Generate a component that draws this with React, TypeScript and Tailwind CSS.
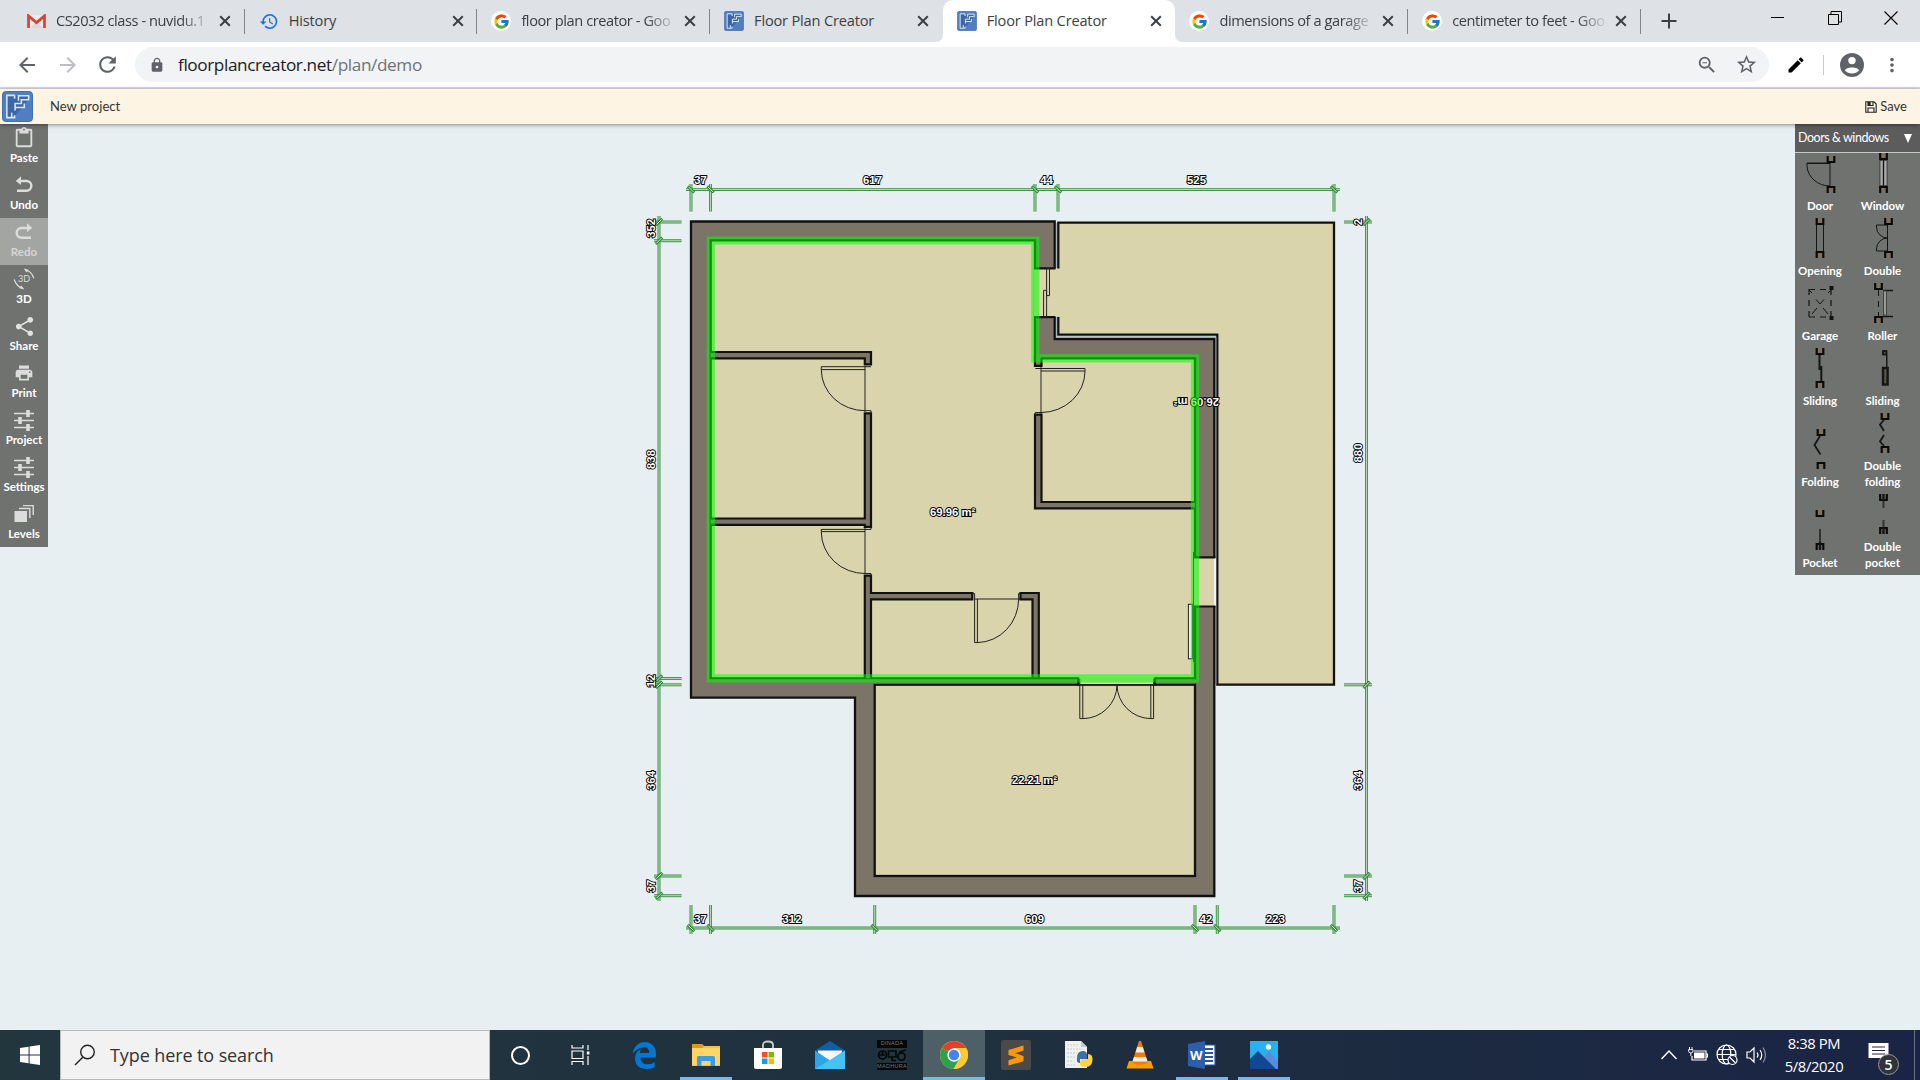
import React from 'react';
import { FcGoogle } from 'react-icons/fc';
import {
  MdArrowBack, MdArrowForward, MdRefresh, MdLock, MdStarBorder, MdZoomOut, MdEdit,
  MdMoreVert, MdHistory, MdShare, MdPrint, MdOutlineContentPaste,
} from 'react-icons/md';

type Kids = { children?: React.ReactNode };

/* ---------- logos ---------- */

const PlanLogo = ({ className }: { className: string }) => (
  <svg viewBox="0 0 32 32" preserveAspectRatio="none" className={className}>
    <rect x="0.5" y="0.5" width="31" height="31" rx="3.5" fill="#4f7fc2" stroke="#3f6cae" />
    <path d="M5 5 H27 V9 L22 16 L12 27 H5Z" fill="#3c66a4" />
    <path d="M13 4.5 H5 V27.5 H13 V25 M13 4.5 V8 M17 10 V5 H27.5 V9 H20 V13 H13.5 V20 M13.5 17 H23 V13 M10 27 V22.5" fill="none" stroke="#dbe7f6" strokeWidth="1.6" />
  </svg>
);

const GmailLogo = () => (
  <svg viewBox="0 0 20 16" preserveAspectRatio="none" className="h-[15px] w-[19px]">
    <rect x="1" y="1" width="18" height="14" rx="1.5" fill="#ececec" />
    <path d="M3 15 L10 8 L17 15Z" fill="#dadada" />
    <path d="M1.6 15 V2 L10 9.2 L18.4 2 V15" fill="none" stroke="#d94235" strokeWidth="2.9" />
  </svg>
);

const GoogleBadge = () => (
  <span className="flex size-5 items-center justify-center rounded-full bg-white">
    <FcGoogle className="size-[17px]" />
  </span>
);

/* ---------- browser tabs ---------- */

const CloseX = () => (
  <svg viewBox="0 0 12 12" className="h-3 w-3">
    <path d="M1.2 1.2 L10.8 10.8 M10.8 1.2 L1.2 10.8" stroke="#3c4043" strokeWidth="2" />
  </svg>
);

const Tab = ({ icon, title, active, sep, fade }: { icon: React.ReactNode; title: string; active?: boolean; sep?: boolean; fade?: boolean }) => (
  <div className={`relative flex h-[42px] w-[232.7px] shrink-0 items-center pl-[14px] ${active ? 'rounded-t-[10px] bg-white' : ''}`}>
    <span className="flex w-5 shrink-0 justify-center">{icon}</span>
    <span className={`ml-[10px] h-[42px] w-[156px] overflow-hidden text-[14.6px] leading-[40px] whitespace-nowrap text-[#3c4043] ${fade ? 'tracking-[-0.42px] [mask-image:linear-gradient(to_right,black_80%,transparent_100%)]' : 'tracking-[-0.18px]'}`}>{title}</span>
    <span className="ml-[7px]"><CloseX /></span>
    {sep && <span className="absolute top-[9px] right-0 h-[25px] w-px bg-[#80868b]" />}
    {active && (
      <>
        <svg viewBox="0 0 8 8" className="absolute bottom-0 -left-2 size-2"><path d="M8 0 V8 H0 Q8 8 8 0Z" fill="#fff" /></svg>
        <svg viewBox="0 0 8 8" className="absolute -right-2 bottom-0 size-2"><path d="M0 0 V8 H8 Q0 8 0 0Z" fill="#fff" /></svg>
      </>
    )}
  </div>
);

const TabStrip = () => (
  <div className="flex h-[42px] items-center bg-[#dee1e6] pl-3">
    <Tab icon={<GmailLogo />} title="CS2032 class - nuvidu.1" sep fade />
    <Tab icon={<MdHistory className="size-[21px] text-[#1a73e8]" />} title="History" sep />
    <Tab icon={<GoogleBadge />} title="floor plan creator - Goo" sep fade />
    <Tab icon={<PlanLogo className="size-5" />} title="Floor Plan Creator" />
    <Tab icon={<PlanLogo className="size-5" />} title="Floor Plan Creator" active />
    <Tab icon={<GoogleBadge />} title="dimensions of a garage" sep fade />
    <Tab icon={<GoogleBadge />} title="centimeter to feet - Goo" sep fade />
    <svg viewBox="0 0 16 16" className="ml-[20px] size-4"><path d="M8 0.5 V15.5 M0.5 8 H15.5" stroke="#3c4043" strokeWidth="2" /></svg>
    <div className="mr-[22px] mb-[6px] ml-auto flex items-center gap-[42.5px]">
      <svg viewBox="0 0 14 14" className="size-[14px]"><path d="M0 6.5 H13" stroke="#000" /></svg>
      <svg viewBox="0 0 14 14" className="size-[14px]"><path d="M0.5 3.5 H10.5 V13.5 H0.5Z M3 3 V0.5 H13.5 V11 H11" fill="none" stroke="#000" /></svg>
      <svg viewBox="0 0 14 14" className="size-[14px]"><path d="M0.5 0.5 L13.5 13.5 M13.5 0.5 L0.5 13.5" stroke="#000" strokeWidth="1.1" /></svg>
    </div>
  </div>
);

const AddressBar = () => (
  <div className="flex h-[47px] items-center border-b-2 border-[#d8dbe0] bg-white text-[#5f6368]">
    <MdArrowBack className="ml-[15px] size-6" />
    <MdArrowForward className="ml-[17px] size-6 text-[#bcbec1]" />
    <MdRefresh className="ml-[15px] size-[25px]" />
    <div className="ml-[15px] flex h-[35px] w-[1634px] items-center rounded-full bg-[#f1f3f4] pr-[11px] pl-[14px]">
      <MdLock className="size-4" />
      <span className="ml-[13px] text-[17.2px] tracking-[-0.39px] text-[#202124]">
        floorplancreator.net<span className="text-[#6f7377]">/plan/demo</span>
      </span>
      <MdZoomOut className="ml-auto size-[22px]" />
      <MdStarBorder className="ml-[17px] size-[23px]" />
    </div>
    <MdEdit className="ml-[17px] size-5 text-black" />
    <span className="ml-[17px] h-5 w-px bg-[#c9ccd0]" />
    <svg viewBox="0 0 24 24" className="ml-[16px] size-6">
      <circle cx="12" cy="12" r="12" fill="#5f6368" />
      <circle cx="12" cy="7.6" r="3.7" fill="#fff" />
      <path d="M5 17.5 C5.5 13.5 18.5 13.5 19 17.5 C16 21.5 8 21.5 5 17.5Z" fill="#fff" />
    </svg>
    <MdMoreVert className="ml-[17px] size-[22px]" />
  </div>
);

const ProjectBar = () => (
  <div className="relative z-10 flex h-[35px] items-center bg-[#fdf4e4] pl-[2px] font-['Lato',sans-serif] text-[13px] text-[#333] shadow-[0_1px_4px_rgba(0,0,0,0.45)]">
    <PlanLogo className="h-[31px] w-[31px]" />
    <span className="ml-[17px] tracking-[0.05px]">New project</span>
    <span className="mr-[13px] ml-auto flex items-center gap-[3px]">
      <svg viewBox="0 0 12 12" className="size-3"><path d="M0.8 0.8 H9 L11.2 3 V11.2 H0.8Z M3 11 V7 H9 V11 M3 1 V4.5 H8 V1" fill="none" stroke="#222" strokeWidth="1.1" /><rect x="3" y="1" width="2.6" height="3.4" fill="#222" /></svg>
      Save
    </span>
  </div>
);

/* ---------- left tools ---------- */

const Glyph = ({ children }: Kids) => (
  <svg viewBox="0 0 24 24" className="size-6 overflow-visible" fill="none" stroke="#dcdcdc" strokeWidth="2.4">{children}</svg>
);

const UndoGlyph = () => (
  <Glyph>
    <path d="M6 8 H14.5 A4.6 4.6 0 0 1 14.5 17.7 H5" />
    <path d="M9 3.2 L3.8 7.9 L9 12Z" fill="#dcdcdc" stroke="none" />
  </Glyph>
);

const RedoGlyph = () => (
  <Glyph>
    <path d="M18 8 H9.5 A4.6 4.6 0 0 0 9.5 17.7 H19" />
    <path d="M15 3.2 L20.2 7.9 L15 12Z" fill="#dcdcdc" stroke="none" />
  </Glyph>
);

const ThreeDGlyph = () => (
  <Glyph>
    <path d="M12.5 2.5 Q19.5 4 21.8 11.2 M11.5 21.5 Q4.5 20 2.2 12.5" strokeWidth="1.2" />
    <path d="M12 1.5 L17 3 L14.5 5.5Z M12 22.5 L7 21 L9.5 18.5Z" fill="#dcdcdc" stroke="none" />
    <text x="12" y="15.2" textAnchor="middle" fontSize="9" fontFamily="Lato, sans-serif" fill="#dcdcdc" stroke="none">3D</text>
  </Glyph>
);

const SlidersGlyph = () => (
  <Glyph>
    <path d="M2 5.5 H22 M2 12.5 H22 M2 19.5 H22" strokeWidth="1.3" />
    <path d="M16 2 V9 M8 9 V16 M16 16 V23" strokeWidth="3.6" />
  </Glyph>
);

const LevelsGlyph = () => (
  <Glyph>
    <path d="M2.5 9 H15 V20 H2.5Z" fill="#dcdcdc" stroke="none" />
    <path d="M7 6.5 H17.8 V16 M11 3.6 H21.2 V13" strokeWidth="1.4" />
  </Glyph>
);

const tools: { label: string; icon: React.ReactNode; off?: boolean }[] = [
  { label: 'Paste', icon: <MdOutlineContentPaste className="size-[22px] text-[#dcdcdc]" /> },
  { label: 'Undo', icon: <UndoGlyph /> },
  { label: 'Redo', icon: <RedoGlyph />, off: true },
  { label: '3D', icon: <ThreeDGlyph /> },
  { label: 'Share', icon: <MdShare className="size-[23px] text-[#e2e2e2]" /> },
  { label: 'Print', icon: <MdPrint className="size-5 text-[#dcdcdc]" /> },
  { label: 'Project', icon: <SlidersGlyph /> },
  { label: 'Settings', icon: <SlidersGlyph /> },
  { label: 'Levels', icon: <LevelsGlyph /> },
];

const ToolColumn = () => (
  <div className="flex w-12 flex-col self-start bg-[#707270] font-['Lato',sans-serif]">
    {tools.map((t) => (
      <div key={t.label} className={`flex h-[47px] flex-col items-center pt-[2px] ${t.off ? 'bg-[#a3a5a3] text-[#d6d6d6]' : 'text-white'}`}>
        <span className="flex size-6 items-center justify-center">{t.icon}</span>
        <span className="text-[11.5px] leading-[16px] font-bold whitespace-nowrap">{t.label}</span>
      </div>
    ))}
  </div>
);

/* ---------- door and window catalogue ---------- */

const Jamb = ({ x, y, up }: { x: number; y: number; up?: boolean }) => (
  <g transform={`translate(${x} ${y})`}>
    <rect x="-3.5" y="0" width="7" height="7" fill="#7d7262" stroke="none" />
    <path d={up ? 'M-3.3 7 V1 H3.3 V7' : 'M-3.3 0 V6 H3.3 V0'} stroke="#0a0a0a" strokeWidth="2.2" />
  </g>
);

const Piece = ({ label, children }: Kids & { label: string }) => (
  <div className="flex w-[62px] flex-col justify-end pb-[4px]">
    <svg viewBox="0 0 62 40" className="h-10 w-[62px] overflow-visible" fill="none" stroke="#151515">{children}</svg>
    <span className="mt-[5px] w-[50px] text-center text-[11.5px] leading-4 font-bold">{label}</span>
  </div>
);

const Catalogue = () => (
  <div className="ml-auto w-[125px] self-start bg-[#707270] font-['Lato',sans-serif] text-white">
    <div className="flex h-[29px] items-center justify-between border-b border-[#c8c8c8] bg-[#5c5c5c] pr-[8px] pl-[3px] text-[12px] tracking-[-0.4px]">
      <span className="text-[12.5px] tracking-[-0.45px]">Doors &amp; windows</span>
      <svg viewBox="0 0 8 9" className="h-[9px] w-2"><path d="M0 0 H8 L4 9Z" fill="#fff" /></svg>
    </div>
    <div className="grid grid-cols-[62.5px_62px] grid-rows-[65px_65px_65px_65px_81px_81px]">
      <Piece label="Door">
        <path d="M35 10 H12 V13 A23 21 0 0 0 35 33 Z M12 10.5 H35" /><Jamb x={36} y={3} /><Jamb x={36} y={33} up />
      </Piece>
      <Piece label="Window">
        <rect x="22" y="7" width="7" height="26" stroke="#333" /><rect x="22.5" y="8" width="2" height="24" fill="#aaa" stroke="none" /><rect x="26.5" y="8" width="2" height="24" fill="#aaa" stroke="none" />
        <path d="M25.5 7 V33" /><Jamb x={25.5} y={0} /><Jamb x={25.5} y={33} up />
      </Piece>
      <Piece label="Opening">
        <path d="M21.5 6 V34 M28.5 6 V34" /><Jamb x={25} y={0} /><Jamb x={25} y={33} up />
      </Piece>
      <Piece label="Double">
        <path d="M30 7 H18.5 V9 A11 11 0 0 0 29.5 20 A11 11 0 0 0 18.5 31 V33 H30 M29.5 7 V33" /><Jamb x={30.5} y={0} /><Jamb x={30.5} y={33} up />
      </Piece>
      <Piece label="Garage">
        <path d="M14 6.5 H36 M14 34 H36 M14 6 V34 M36 6 V34" strokeDasharray="6 5" strokeWidth="1.2" />
        <path d="M14 7 L17 10 M21 16.5 L25 21 L29 16.500 M33 10 L36 7 M22 25 L17 31 M28 25 L33 31" />
        <rect x="34.5" y="3" width="4" height="4" fill="#111" stroke="none" /><rect x="34.5" y="33" width="4" height="4" fill="#111" stroke="none" />
      </Piece>
      <Piece label="Roller">
        <path d="M20.5 7 V33" strokeDasharray="6 5" /><path d="M25 7.5 H35 M25 33.5 H35" strokeWidth="1.3" />
        <rect x="25.5" y="8" width="3" height="24" fill="#999" stroke="#444" /><Jamb x={20.5} y={0} /><Jamb x={20.5} y={33} up />
      </Piece>
      <Piece label="Sliding">
        <path d="M24.5 7 V22 M26.3 18 V33" strokeWidth="2" /><Jamb x={25} y={0} /><Jamb x={25} y={33} up />
      </Piece>
      <Piece label="Sliding">
        <path d="M28.8 7 V36" strokeWidth="1.400" /><rect x="25" y="20" width="4.6" height="16.5" fill="#5c554a" strokeWidth="2.400" /><rect x="25" y="3" width="3.5" height="3.5" fill="#555" strokeWidth="1.8" />
      </Piece>
      <Piece label="Folding">
        <path d="M25 7 L19.5 16 L25.5 25.5" strokeWidth="1.8" /><Jamb x={26} y={0} /><Jamb x={26} y={33} up />
      </Piece>
      <Piece label="Double folding">
        <path d="M26 7 L22 11.5 L26 18 M26 22 L22 28.5 L26 33" strokeWidth="1.8" /><Jamb x={27} y={0} /><Jamb x={27} y={33} up />
      </Piece>
      <Piece label="Pocket">
        <path d="M25 19 V34" strokeWidth="2" stroke="#333" /><Jamb x={25} y={0} /><Jamb x={25} y={33} up /><path d="M25 32 V40" strokeWidth="2.4" />
      </Piece>
      <Piece label="Double pocket">
        <path d="M25.5 6 V14 M25.5 26 V34" strokeWidth="2" stroke="#333" /><Jamb x={25.5} y={0} /><Jamb x={25.5} y={33} up /><path d="M25.5 0 V7 M25.5 33 V40" strokeWidth="2.4" />
      </Piece>
    </div>
  </div>
);

/* ---------- floor plan drawing ---------- */

const INK = '#111';
const FLOOR = '#dad4ad';
const WALL = '#7d7468';
const DIM = '#2e8b32';

const topStops = [691, 710.5, 1035, 1058, 1334];
const bottomStops = [691, 710.5, 874.7, 1195, 1217.3, 1334];
const leftStops = [222, 240.7, 678.5, 684.8, 876, 895.7];
const rightStops = [222, 684.8, 876, 895.7];

const DimLine = ({ d }: { d: string }) => (
  <g fill="none">
    <path d={d} stroke={DIM} strokeWidth="3" strokeOpacity="0.9" />
    <path d={d} stroke="#b4d6b9" strokeWidth="1.1" />
  </g>
);

const Slash = ({ x, y, flip }: { x: number; y: number; flip?: boolean }) => (
  <g transform={`translate(${x} ${y})`}>
    <path d={flip ? 'M-3.2 3.2 L3.2 -3.2' : 'M-3.2 -3.2 L3.2 3.2'} stroke={DIM} strokeWidth="2.8" />
    <path d={flip ? 'M-2.6 2.6 L2.6 -2.6' : 'M-2.6 -2.6 L2.6 2.6'} stroke="#d5e8d8" strokeWidth="1" />
  </g>
);

const Note = ({ x, y, turn = 0, children }: Kids & { x: number; y: number; turn?: number }) => (
  <text x="0" y="4" transform={`translate(${x} ${y}) rotate(${turn})`} textAnchor="middle" fontSize="11.3" fontWeight="700" fontFamily="Liberation Sans, sans-serif" fill="#fff" stroke="#000" strokeWidth="1.9" paintOrder="stroke">{children}</text>
);

const FloorPlan = () => (
  <svg viewBox="48 124 1747 906" className="h-[906px] w-[1747px] shrink-0">
    {/* terrace */}
    <path d="M1058.3 222.7 H1334 V684.7 H1217.3 V334.7 H1058.3Z" fill={FLOOR} />
    <path d="M1058.3 269 V222.7 H1334 V684.7 H1217.3 V334.7 H1058.3 V316.5" fill="none" stroke={INK} strokeWidth="2.3" />
    <path d="M1056.5 223 V268 M1056.5 317 V336.8 H1215.8 V684" fill="none" stroke="#aab5b8" strokeWidth="1" />
    {/* walls and rooms */}
    <path d="M691 221.5 H1054.7 V339 H1214.3 V896 H855 V697.7 H691Z" fill={WALL} stroke={INK} strokeWidth="2.3" />
    <path d="M710.7 240.4 H1035 V358.3 H1195 V678.3 H710.7Z" fill={FLOOR} stroke={INK} strokeWidth="2.3" />
    <rect x="874.7" y="684.7" width="320.3" height="191.3" fill={FLOOR} stroke={INK} strokeWidth="2.3" />
    {/* wall openings */}
    <rect x="1033.8" y="268.5" width="26" height="48.5" fill={FLOOR} />
    <path d="M1034 268.3 H1055.5 M1034 317.2 H1055.5" stroke={INK} strokeWidth="2.2" />
    <rect x="1193" y="557.5" width="21" height="48.5" fill={FLOOR} />
    <rect x="1214" y="558" width="2" height="48" fill="#f0f5f8" />
    <path d="M1194 557.3 H1215.4 M1194 606.5 H1215.4" stroke={INK} strokeWidth="2.2" />
    <rect x="1034" y="356" width="7" height="2" fill={WALL} />
    {/* partitions */}
    <g fill={WALL} stroke={INK} strokeWidth="2.2">
      <path d="M710.7 352 H871 V364.3 H864.8 V358.3 H710.7" />
      <path d="M710.7 518.5 H864.8 V413.3 H871 V526.8 H864.8 V524.8 H710.7" />
      <path d="M864.8 678.3 V575.7 H871 V593 H972.3 V599.3 H871 V678.3" />
      <path d="M1020.5 593 H1038.8 V678.3 H1032.5 V599.3 H1020.5Z" />
      <path d="M1195 502 H1041.5 V414.7 H1035 V508.4 H1195" />
      <path d="M1035 356 V365.8 H1041.5 V358.3" />
    </g>
    <rect x="709" y="679.4" width="486" height="4.2" fill={WALL} />
    <rect x="1078.3" y="676" width="76.7" height="9" fill={FLOOR} />
    <path d="M1078.3 677.5 V685.5 M1155 677.5 V685.5" stroke={INK} strokeWidth="2.3" />
    {/* doors */}
    <g fill="none" stroke="#222" strokeWidth="1">
      <path d="M821.3 366.7 H871 M865 369.6 H821.3 M821.3 366.5 V370 A43.7 41 0 0 0 865 410.7 H871 V413 M865 366 V412" />
      <path d="M821.3 529.4 H871 V527 M865 531.6 H821.3 M821.3 529 V532 A43.7 41.5 0 0 0 865 573.5 H871 V576 M865 528 V574" />
      <path d="M1035.3 368.5 H1085 V371 A44 41.5 0 0 1 1041 412.5 H1035.3 V415 M1041 371 H1085 M1041 366 V414" />
      <path d="M972.5 593.5 H974.6 V642.6 H977.4 V599 M974.6 599 H1020 M977 642.6 A42 43.5 0 0 0 1018.6 599 V593.5 H1020.5" />
      <path d="M1079.8 679 V718.6 H1082.8 V685 M1079.8 684.5 H1153.6 M1082.8 718.6 A34.2 34 0 0 0 1117 685 A34.2 34 0 0 0 1150.8 718.6 H1153.6 V679 M1150.8 718.6 V685" />
      <path d="M1046.6 268.5 H1049.5 V295.6 H1046.6 Z M1043.6 290.3 H1046.6 V317 H1043.6Z" />
      <rect x="1188.4" y="604.3" width="4" height="54.5" fill="#e8eff3" />
      <path d="M1193.5 552 V662" />
    </g>
    <Note x={1196.4} y={401.5} turn={180}>26.09 m²</Note>
    {/* selected room */}
    <path d="M710.8 240.5 H1035.3 V358.3 H1195 V678.4 H710.8Z" fill="none" stroke="#00ff00" strokeOpacity="0.55" strokeWidth="8.2" />
    <Note x={952.6} y={511.7}>69.96 m²</Note>
    <Note x={1034.5} y={780}>22.21 m²</Note>
    {/* dimensions */}
    <DimLine d="M686 189.4 H1340" />
    <DimLine d="M686 928 H1340" />
    <DimLine d="M659 216 V901" />
    <DimLine d="M1366.5 216 V901" />
    {topStops.map((x) => <g key={x}><DimLine d={`M${x} 184 V211.5`} /><Slash x={x} y={189.4} /></g>)}
    {bottomStops.map((x) => <g key={x}><DimLine d={`M${x} 905 V934`} /><Slash x={x} y={928} /></g>)}
    {leftStops.map((y) => <g key={y}><DimLine d={`M654 ${y} H681.5`} /><Slash x={659} y={y} flip /></g>)}
    {rightStops.map((y) => <g key={y}><DimLine d={`M1344 ${y} H1372`} /><Slash x={1366.5} y={y} flip /></g>)}
    <Note x={700.5} y={180}>37</Note>
    <Note x={872.5} y={180}>617</Note>
    <Note x={1046.5} y={180}>44</Note>
    <Note x={1196.5} y={180}>525</Note>
    <Note x={700.5} y={919}>37</Note>
    <Note x={792} y={919}>312</Note>
    <Note x={1034.5} y={919}>609</Note>
    <Note x={1206} y={919}>42</Note>
    <Note x={1275.5} y={919}>223</Note>
    <Note x={650.5} y={231.5} turn={-90}>35</Note>
    <Note x={650.5} y={222} turn={-90}>2</Note>
    <Note x={650.5} y={459.5} turn={-90}>838</Note>
    <Note x={650.5} y={681} turn={-90}>12</Note>
    <Note x={650.5} y={780.5} turn={-90}>364</Note>
    <Note x={650.5} y={886} turn={-90}>37</Note>
    <Note x={1357.5} y={222} turn={-90}>2</Note>
    <Note x={1357.5} y={453} turn={-90}>880</Note>
    <Note x={1357.5} y={780.5} turn={-90}>364</Note>
    <Note x={1357.5} y={886} turn={-90}>37</Note>
  </svg>
);

/* ---------- taskbar ---------- */

const Slot = ({ children, open, active, wide }: Kids & { open?: boolean; active?: boolean; wide?: boolean }) => (
  <div className={`relative flex h-[50px] w-[62px] shrink-0 items-center justify-center ${active ? 'bg-[#4d5f67]' : ''}`}>
    {children}
    {open && <span className={`absolute bottom-0 h-[3px] bg-[#76b9ed] ${wide ? 'w-full' : 'w-[52px]'}`} />}
  </div>
);

const Taskbar = () => (
  <div className="flex h-[50px] items-center bg-linear-to-r from-[#22363e] via-[#1f303e] to-[#1a2444] text-white">
    <div className="flex w-[60px] justify-center">
      <svg viewBox="0 0 20 20" className="size-5"><path d="M0 3 L8.6 1.7 V9.5 H0Z M9.6 1.5 L20 0 V9.5 H9.6Z M0 10.5 H8.6 V18.3 L0 17Z M9.6 10.5 H20 V20 L9.6 18.5Z" fill="#fff" /></svg>
    </div>
    <div className="flex h-[50px] w-[430px] items-center border border-[#b9b9b9] bg-[#f2f2f2] pl-[13px] text-[#333]">
      <svg viewBox="0 0 22 22" className="size-[22px]" fill="none" stroke="#222" strokeWidth="1.4"><circle cx="13.5" cy="8" r="6.8" /><path d="M9 13 L1 21" /></svg>
      <span className="ml-[14px] text-[18px] tracking-[-0.1px]">Type here to search</span>
    </div>
    <div className="flex w-[60px] justify-center">
      <span className="size-[19px] rounded-full border-[2.4px] border-white" />
    </div>
    <div className="flex w-[63px] justify-center pr-[2px]">
      <svg viewBox="0 0 20 20" className="size-5" fill="none" stroke="#fff" strokeWidth="1.2"><path d="M1 0 V3 H12 V0 M1 20 V16.5 H12 V20 M1 6 H12 V13.5 H1Z M17 0 V5 M17 11 V20" /><rect x="15.8" y="6.5" width="2.6" height="3" fill="#fff" stroke="none" /></svg>
    </div>
    <Slot>
      <svg viewBox="0 0 24 27" className="h-[27px] w-6"><path d="M0.5 12 C2 3 8 0 13 0 C20 0 24 5.5 24 12 V15.5 H8.3 C8.6 20.5 12 22.3 15.5 22.3 C18.5 22.3 21 21.5 22.7 20.3 V25 C20.5 26.3 17.5 27 14.5 27 C7.5 27 3 23 3 16.5 C3 12 5 9 9 7 C8.2 8.2 8 9.5 7.9 11 H17.2 C17.2 7 15.3 5.2 12 5.2 C7.5 5.2 3.5 8 0.5 12Z" fill="#0078d7" /></svg>
    </Slot>
    <Slot open>
      <svg viewBox="0 0 28 24" className="h-6 w-7"><path d="M0 1 H10 L12 3 H28 V23 H0Z" fill="#f5c14a" /><path d="M0 1 H10 L12 3.5 L10 5 H0Z" fill="#d9991e" /><path d="M0 5 H28 V22 H0Z" fill="#ffd566" /><path d="M5 23 V14.5 Q5 13 6.5 13 H21.5 Q23 13 23 14.5 V23 H18.5 V18 H9.5 V23Z" fill="#3f9be6" /></svg>
    </Slot>
    <Slot>
      <svg viewBox="0 0 28 30" className="h-[30px] w-7"><path d="M9 9 V5 Q9 1.5 14 1.5 Q19 1.5 19 5 V9" fill="none" stroke="#c9cdcf" strokeWidth="1.8" /><path d="M0 8 H28 V27 Q28 29 26 29 H2 Q0 29 0 27Z" fill="#fff" /><path d="M8 12 H13.5 V17.5 H8Z" fill="#f25022" /><path d="M14.5 12 H20 V17.5 H14.5Z" fill="#7fba00" /><path d="M8 18.5 H13.5 V24 H8Z" fill="#00a4ef" /><path d="M14.5 18.5 H20 V24 H14.5Z" fill="#ffb900" /></svg>
    </Slot>
    <Slot>
      <svg viewBox="0 0 30 28" className="h-7 w-[30px]"><path d="M0 9.5 L15 0 L30 9.5 V14 H0Z" fill="#0f5ea8" /><path d="M3 9.5 H27 V18 L15 22 L3 18Z" fill="#f5f7f9" /><path d="M0 9.5 L15 19.5 L30 9.5 V28 H0Z" fill="#29a7ea" /><path d="M0 28 L15 19 L30 9.5 V28Z" fill="#46c2f5" /></svg>
    </Slot>
    <Slot>
      <div className="flex h-[30px] w-[30px] flex-col items-center justify-between bg-[#05080a] font-['Liberation_Sans',sans-serif] text-[5.5px] leading-[7px] tracking-[0.3px] text-[#777]">
        <span>DINADA</span>
        <svg viewBox="0 0 30 15" className="h-[15px] w-[30px] bg-[#22343d]" fill="none" stroke="#06090b" strokeWidth="1.7"><circle cx="5.5" cy="7" r="4" /><path d="M2 7 H8 M5.500 4 V7 M11.500 3 H19 V9 H11.500Z M15 9 V12.5 H19" /><circle cx="24.5" cy="8.5" r="3.6" /><path d="M22 4 L29 2" /></svg>
        <span>MADHURA</span>
      </div>
    </Slot>
    <Slot open active wide>
      <svg viewBox="0 0 28 28" className="size-7"><circle cx="14" cy="14" r="14" fill="#fbc936" /><path d="M14 14 L1.9 7 A14 14 0 0 1 26.1 7 H14Z" fill="#e2402f" /><path d="M14 14 L1.9 7 A14 14 0 0 0 13.5 28 L19.8 17.2Z" fill="#2da14c" /><path d="M14 7.2 H26.2 A14 14 0 0 1 13.5 28 L20 17.3Z" fill="#fbc936" /><circle cx="14" cy="14" r="6.7" fill="#fff" /><circle cx="14" cy="14" r="5.2" fill="#4384f3" /></svg>
    </Slot>
    <Slot>
      <svg viewBox="0 0 30 30" className="size-[30px]"><rect width="30" height="30" rx="2.5" fill="#4a4a4a" /><path d="M22.5 5.5 V10.5 L14 13.3 L22.5 16 V21.3 L7.5 25.5 V20.3 L16 17.5 L7.5 15 V10Z" fill="#ff9800" /></svg>
    </Slot>
    <Slot>
      <svg viewBox="0 0 30 30" className="size-[30px]"><path d="M2 1 H18 L24 7 V28 H2Z" fill="#f0f0ee" /><path d="M18 1 V7 H24Z" fill="#c5c9cb" /><path d="M4 5 H15 M4 9 H20 M4 13 H14 M4 17 H12 M4 21 H11 M4 25 H12" stroke="#c9cdd0" strokeDasharray="2 1" /><path d="M14 18 Q14 11 20 11 Q24 11 24 15 V19 H17 V23 Q13 23 14 18Z" fill="#3771a5" /><path d="M17 24 Q17 19 21 19 H25 V14 Q30 14 29.5 20 Q29 27 23 27 Q17 27 17 24Z" fill="#ffd23f" /></svg>
    </Slot>
    <Slot>
      <svg viewBox="0 0 28 28" className="size-7"><path d="M3 20 H25 L27.5 27.5 H0.5Z" fill="#f5a000" /><path d="M13 0 H15 L22 22 Q14 26 6 22Z" fill="#f27c00" /><path d="M11.2 6 H16.8 L18.5 11.5 H9.5Z M8 16 H20 L21.5 20.5 H6.5Z" fill="#eceff1" /></svg>
    </Slot>
    <Slot open>
      <svg viewBox="0 0 28 28" className="size-7"><path d="M15 4 H27 V24 H15Z" fill="#fff" stroke="#2b579a" strokeWidth="1.2" /><path d="M17 8 H25 M17 12 H25 M17 16 H25 M17 20 H25" stroke="#2b579a" strokeWidth="1.8" /><path d="M0 3 L17 0 V28 L0 25Z" fill="#2b5fab" /><text x="8.3" y="18.5" textAnchor="middle" fontSize="13" fontWeight="700" fontFamily="Open Sans, sans-serif" fill="#fff">W</text></svg>
    </Slot>
    <Slot open>
      <svg viewBox="0 0 28 28" className="size-7"><rect width="28" height="28" fill="#2bb0ee" /><path d="M14 16 L19 10 L28 21 V28 H14Z" fill="#5b8cdb" /><path d="M0 18 L8 10 L26 28 H0Z" fill="#11488f" /><circle cx="18.5" cy="6" r="2.7" fill="#fff" /></svg>
    </Slot>
    <div className="ml-auto flex items-center">
      <svg viewBox="0 0 16 10" className="h-[10px] w-4" fill="none" stroke="#fff" strokeWidth="1.4"><path d="M0.5 9 L8 1 L15.5 9" /></svg>
      <svg viewBox="0 0 20 16" className="ml-[11px] h-4 w-5" fill="none" stroke="#fff" strokeWidth="1.2"><path d="M6 4 H18 V13 H4 V9" /><rect x="6" y="5.5" width="10.5" height="6" fill="#fff" stroke="none" /><path d="M18 7 H19.5 V10 H18" /><path d="M1.5 0 V3 M4 0 V3 M0.6 2.6 H5 V4 Q5 6 2.8 6 Q0.6 6 0.6 4Z M2.8 6 V9" strokeWidth="0.9" /></svg>
      <svg viewBox="0 0 22 22" className="ml-[8px] size-[22px]" fill="none" stroke="#fff" strokeWidth="1.2"><circle cx="10.5" cy="10.5" r="9.5" /><ellipse cx="10.5" cy="10.5" rx="4.3" ry="9.5" /><path d="M1 10.5 H20 M2.5 5.5 H18.5 M2.5 15.5 H12" /><circle cx="16.5" cy="16" r="4.5" fill="#1b2842" /><path d="M13.5 13 L19.5 19" /></svg>
      <svg viewBox="0 0 22 18" className="ml-[8px] h-[18px] w-[22px]" fill="none" stroke="#fff" strokeWidth="1.2"><path d="M1 6 H4 L8 2 V16 L4 12 H1Z M11 6.5 Q13 9 11 11.5 M14 4 Q17.5 9 14 14" /><path d="M17 1.5 Q22 9 17 16.5" stroke="#8b94a5" /></svg>
      <div className="ml-[14px] w-[64px] text-center text-[14.8px] leading-[23px] tracking-[-0.4px] whitespace-nowrap">
        <div>8:38 PM</div>
        <div>5/8/2020</div>
      </div>
      <div className="relative ml-[22px] h-[30px] w-[30px]">
        <svg viewBox="0 0 22 22" className="h-[22px] w-[22px]"><path d="M0.5 3 H20.5 V18 H16 V22 L12 18 H0.5Z" fill="#fff" /><path d="M4 7 H17 M4 10.5 H17 M4 14 H17" stroke="#1b2642" strokeWidth="1.1" /></svg>
        <span className="absolute top-[14px] left-[10px] flex size-[21px] items-center justify-center rounded-full border border-[#999] bg-[#30343a] text-[14px] font-semibold">5</span>
      </div>
      <span className="ml-[16px] h-[50px] w-px bg-[#6b7387]" />
      <span className="w-[5px]" />
    </div>
  </div>
);

export default function App() {
  return (
    <div className="flex h-[1080px] w-[1920px] flex-col overflow-hidden bg-[#e8eff3] font-['Open_Sans',sans-serif]">
      <TabStrip />
      <AddressBar />
      <ProjectBar />
      <div className="flex h-[906px]">
        <ToolColumn />
        <FloorPlan />
        <Catalogue />
      </div>
      <Taskbar />
    </div>
  );
}
